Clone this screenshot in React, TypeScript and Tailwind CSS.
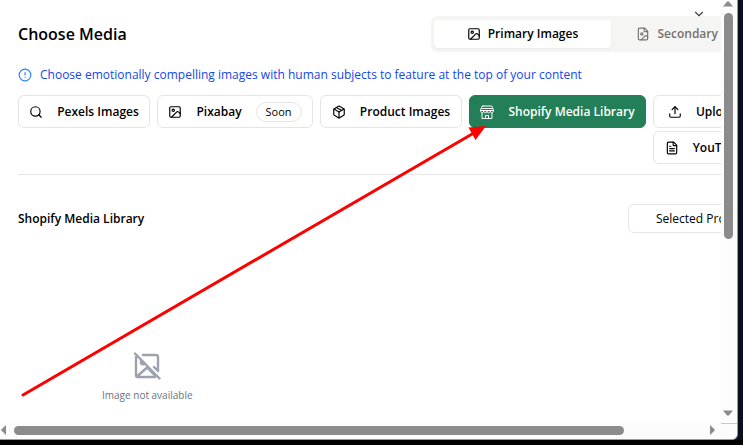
import { useState, type ReactNode } from "react";
import {
  ChevronDown,
  CircleAlert,
  FileImage,
  FileText,
  Image as ImageIcon,
  Package,
  Search,
  Upload,
} from "lucide-react";

function StoreIcon() {
  return (
    <svg className="size-[14px] shrink-0" viewBox="0 0 14 14" fill="none" stroke="currentColor" strokeLinejoin="round" strokeLinecap="round">
      <path d="M3 1h8a1.5 1.5 0 0 1 1.500 1.500l1 3H.5l1-3A1.500 1.500 0 0 1 3 1zM2 3.500h10M.5 5.500c0 3 3 3 3.250.5 0 2.500 3.250 2.500 3.250 0 0 2.500 3.250 2.500 3.250 0 .250 2.500 3.250 2.500 3.250-.5M2 8v5.500h10V8M5.500 13.500v-3h3v3" />
    </svg>
  );
}

function MissingImageIcon() {
  return (
    <svg aria-hidden="true" className="size-7" viewBox="0 0 28 28" fill="none" stroke="currentColor" strokeWidth="2.4" strokeLinecap="round" strokeLinejoin="round">
      <path d="M2 1.500 26.500 26.500M10 3h13a2 2 0 0 1 2 2v14M3 5v18a2 2 0 0 0 2 2h17M4.500 24l9-8M14 15.500l8 8M25 19l-4-4" />
      <path d="M8 8v3a2 2 0 0 0 3.500.5z" fill="currentColor" />
    </svg>
  );
}

type SourceProps = { id: string; label: string; icon: ReactNode; active: boolean; onSelect: (id: string) => void; className?: string; badge?: string };

function SourceButton({ id, label, icon, active, onSelect, className = "", badge }: SourceProps) {
  return (
    <button
      type="button"
      onClick={() => onSelect(id)}
      className={`flex h-[33px] items-center justify-center gap-[14px] rounded-md border text-[12px] font-semibold whitespace-nowrap ${
        active ? "border-[#237f57] bg-[#237f57] text-white" : "border-neutral-200 bg-white text-black"
      } ${className}`}
    >
      {icon}
      <span>{label}</span>
      {badge && <span className="rounded-full border border-neutral-200 px-[9px] text-[11px] leading-[18px] font-medium">{badge}</span>}
    </button>
  );
}

function VerticalScrollbar() {
  return (
    <div aria-hidden="true" className="flex flex-col items-center justify-between bg-[#fcfcfc] pr-[2px] pb-[7px]">
      <div className="flex h-full flex-col items-center gap-[6px]">
        <svg className="mt-[1px] h-[6px] w-[10px] shrink-0" viewBox="0 0 10 6"><path d="M0 5.5 4.2.5h1.6L10 5.5z" fill="#8b8b8b" /></svg>
        <div className="h-[55%] w-[9px] rounded-full bg-[#8b8b8b]" />
      </div>
      <svg className="h-[6px] w-[10px] shrink-0" viewBox="0 0 10 6"><path d="M0 .5h10L5.8 5.5H4.2z" fill="#8b8b8b" /></svg>
    </div>
  );
}

function HorizontalScrollbar() {
  return (
    <div aria-hidden="true" className="flex items-center justify-between bg-[#fcfcfc] pr-[6px] pb-[2px] pl-[1px]">
      <div className="flex w-full items-center gap-[8px]">
        <svg className="h-[10px] w-[5px] shrink-0" viewBox="0 0 5 10"><path d="M5 0v10L.3 5.6V4.4z" fill="#8b8b8b" /></svg>
        <div className="h-[9px] w-[86%] rounded-full bg-[#8b8b8b]" />
      </div>
      <svg className="h-[10px] w-[5px] shrink-0" viewBox="0 0 5 10"><path d="M0 0v10l4.7-4.4V4.4z" fill="#8b8b8b" /></svg>
    </div>
  );
}

export default function App() {
  const [source, setSource] = useState("shopify");
  const [tab, setTab] = useState("primary");
  const icon = "size-[14px] shrink-0";
  const tabs = [
    { id: "primary", label: "Primary Images", Icon: ImageIcon },
    { id: "secondary", label: "Secondary Images", Icon: FileImage },
  ];

  return (
    <div className="h-screen bg-[#0a1020] font-['Open_Sans','Noto_Sans',sans-serif] text-black">
      <div className="flex h-full flex-col">
        <div className="relative mr-[5px] grid min-h-0 flex-1 grid-cols-[minmax(0,1fr)_16px] grid-rows-[minmax(0,1fr)_16px] overflow-hidden rounded-br-md border-r border-b border-[#999] bg-white">
          <main className="overflow-hidden pt-4 pl-[18px]">
            <div className="min-w-[773px]">
              <header className="flex items-center justify-between">
                <h1 className="text-[16px] font-semibold">Choose Media</h1>
                <div role="tablist" className="grid h-9 grid-cols-[177px_177px] rounded-md bg-[#f5f5f4] px-[3px] py-1">
                  {tabs.map(({ id, label, Icon }) => (
                    <button
                      key={id}
                      type="button"
                      role="tab"
                      aria-selected={tab === id}
                      onClick={() => setTab(id)}
                      className={`flex items-center justify-center gap-[7px] rounded text-[12px] font-semibold whitespace-nowrap ${
                        tab === id ? "bg-white text-black shadow-xs" : "text-[#78716c]"
                      }`}
                    >
                      <Icon className={icon} />
                      {label}
                    </button>
                  ))}
                </div>
              </header>
              <p className="mt-3 flex h-[22px] items-center gap-2 text-[12px] text-blue-700">
                <CircleAlert className="size-[14px] shrink-0 text-blue-500" />
                Choose emotionally compelling images with human subjects to feature at the top of your content
              </p>
              <div className="mt-[9px] grid grid-cols-[132px_156px_142px_177px_minmax(0,1fr)] gap-x-[7px] gap-y-[3px] border-b border-neutral-200 pb-[10px]">
                <SourceButton id="pexels" label="Pexels Images" icon={<Search className={icon} />} active={source === "pexels"} onSelect={setSource} />
                <SourceButton id="pixabay" label="Pixabay" badge="Soon" icon={<ImageIcon className={icon} />} active={source === "pixabay"} onSelect={setSource} />
                <SourceButton id="product" label="Product Images" icon={<Package className={icon} />} active={source === "product"} onSelect={setSource} />
                <SourceButton id="shopify" label="Shopify Media Library" icon={<StoreIcon />} active={source === "shopify"} onSelect={setSource} />
                <SourceButton id="upload" label="Upload Image" icon={<Upload className={icon} />} active={source === "upload"} onSelect={setSource} />
                <SourceButton id="youtube" label="YouTube Video" icon={<FileText className={icon} />} active={source === "youtube"} onSelect={setSource} className="col-start-5" />
              </div>
              <section>
                <div className="mt-[29px] flex items-center justify-between">
                  <h2 className="text-[12px] leading-[27px] font-semibold">Shopify Media Library</h2>
                  <button type="button" className="h-[29px] w-[163px] rounded-md border border-neutral-200 pl-[27px] text-left text-[12px] whitespace-nowrap">Selected Products</button>
                </div>
                <div className="mt-[119px] ml-[84px] flex w-fit flex-col items-center gap-[7px]">
                  <span className="text-[#9ca3af]"><MissingImageIcon /></span>
                  <p className="text-[10px] leading-4 text-gray-500">Image not available</p>
                </div>
              </section>
            </div>
          </main>
          <VerticalScrollbar />
          <HorizontalScrollbar />
          <div className="border-t border-[#c8c8c8] bg-[#fcfcfc]" />
          <ChevronDown aria-hidden="true" className="absolute top-[7px] right-[31px] size-[14px] text-[#444]" />
          <svg aria-hidden="true" className="pointer-events-none absolute top-0 left-0 h-[400px] w-[500px]" viewBox="0 0 500 400">
            <path d="M23 395 473 133.500" stroke="#f00" strokeWidth="3" strokeLinecap="round" />
            <path d="m486 126-17.500 1.500 7 12.500z" fill="#f00" />
          </svg>
        </div>
        <div className="h-[5px] bg-black" />
      </div>
    </div>
  );
}
